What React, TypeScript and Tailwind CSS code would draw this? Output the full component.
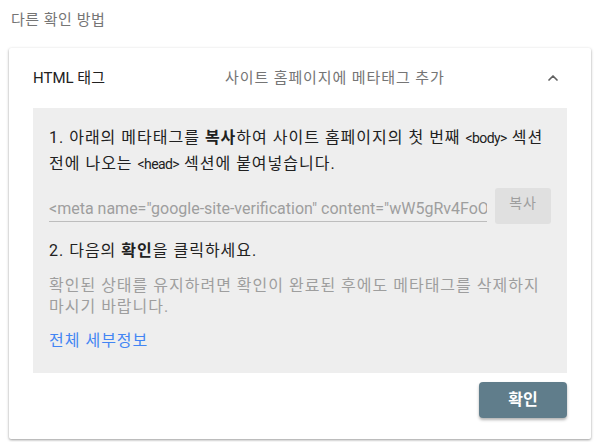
import { ChevronUp } from "lucide-react";

const font = {
  fontFamily: '"Roboto", "Noto Sans CJK KR", sans-serif',
};

export default function App() {
  return (
    <div
      className="h-[442px] w-[600px] overflow-hidden bg-white px-[9px] pt-[8px] text-[16px] text-[#212121]"
      style={font}
    >
      <div className="pl-[2px] text-[15px] leading-[24px] tracking-[0.5px] text-[#757575]">다른 확인 방법</div>

      <div className="mt-[16px] h-[391px] rounded-[2px] bg-white shadow-[0_1px_3px_rgba(0,0,0,0.3),0_1px_2px_rgba(0,0,0,0.12)]">
        <div className="flex h-[58px] items-center pl-[24px] pr-[30px] pt-[2px]">
          <div className="w-[192px] text-[15px] text-[#212121]">HTML 태그</div>
          <div className="flex-1 text-[15px] tracking-[0.9px] text-[#757575]">사이트 홈페이지에 메타태그 추가</div>
          <ChevronUp className="h-[16px] w-[16px] text-[#616161]" strokeWidth={2.6} />
        </div>

        <div className="mx-[24px] mt-[2px] h-[265px] bg-[#eeeeee] px-[16px] pt-[17px] tracking-[1px] [word-break:keep-all]">
          <p className="leading-[25px] text-[#212121]">
            1. 아래의 메타태그를 <span className="font-bold">복사</span>하여 사이트 홈페이지의 첫 번째{" "}
            <span className="text-[14px] tracking-[-0.6px]">&lt;body&gt;</span> 섹션 전에 나오는{" "}
            <span className="text-[14px] tracking-[-0.6px]">&lt;head&gt;</span> 섹션에 붙여넣습니다.
          </p>

          <div className="mt-[11px] flex items-end gap-[8px]">
            <div className="h-[34px] w-[439px] overflow-hidden whitespace-nowrap border-b border-[#bdbdbd] pt-[9px] tracking-normal text-[#9e9e9e]">
              &lt;meta name="google-site-verification" content="wW5gRv4FoOxxkK1cCyxx9R" /&gt;
            </div>
            <button className="mb-[-2px] h-[36px] w-[56px] rounded-[3px] bg-[#e0e0e0] pb-[6px] text-[14px] text-[#9e9e9e]">
              복사
            </button>
          </div>

          <p className="mt-[17px] leading-[24px] text-[#212121]">
            2. 다음의 <span className="font-bold">확인</span>을 클릭하세요.
          </p>

          <p className="mt-[12px] leading-[21px] text-[#9e9e9e]">
            확인된 상태를 유지하려면 확인이 완료된 후에도 메타태그를 삭제하지 마시기 바랍니다.
          </p>

          <a className="mt-[12px] block leading-[24px] text-[#4285f4]">전체 세부정보</a>
        </div>

        <div className="mx-[24px] mt-[9px] flex justify-end">
          <button className="h-[36px] w-[88px] rounded-[4px] bg-[#607d8b] text-[16px] font-bold text-white shadow-[0_2px_3px_rgba(0,0,0,0.3)]">
            확인
          </button>
        </div>
      </div>
    </div>
  );
}
